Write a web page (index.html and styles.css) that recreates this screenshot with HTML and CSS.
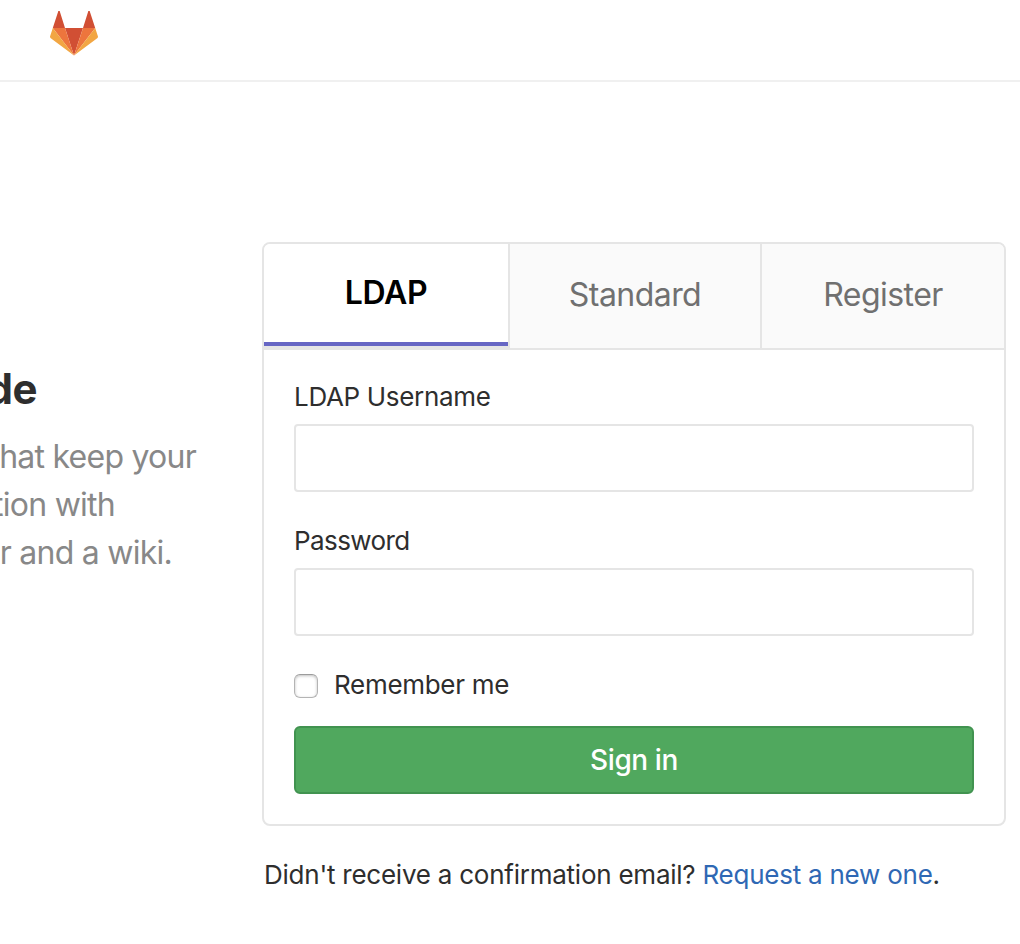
FILE: index.html
```html
<!DOCTYPE html>
<html lang="en">
<head>
<meta charset="utf-8">
<title>Sign in · GitLab</title>
<link rel="stylesheet" href="styles.css">
</head>
<body>
<header class="navbar">
  <svg class="logo" width="48" height="45" viewBox="0 0 48 45" aria-label="GitLab">
    <path fill="#d14f34" d="M24 44.5 15 17h18z"/>
    <path fill="#ed753d" d="M24 44.5 15 17H2.8z"/>
    <path fill="#f2a643" d="M2.8 17 .1 25.2a1.8 1.8 0 0 0 .7 2L24 44.5z"/>
    <path fill="#d14f34" d="M2.8 17H15L9.9.7a.9.9 0 0 0-1.8 0z"/>
    <path fill="#ed753d" d="M24 44.5 33 17h12.2z"/>
    <path fill="#f2a643" d="M45.2 17l2.7 8.2a1.8 1.8 0 0 1-.7 2L24 44.5z"/>
    <path fill="#d14f34" d="M45.2 17H33L38.1.7a.9.9 0 0 1 1.8 0z"/>
  </svg>
</header>
<main class="content">
  <section class="intro">
    <h1 class="intro-title">de</h1>
    <p class="intro-line line-1">hat keep your</p>
    <p class="intro-line line-2">tion with</p>
    <p class="intro-line line-3">r and a wiki.</p>
  </section>
  <section class="login">
    <div class="panel">
      <nav class="tabs">
        <a class="tab active">LDAP</a>
        <a class="tab">Standard</a>
        <a class="tab">Register</a>
      </nav>
      <form class="form">
        <label class="label" for="user">LDAP Username</label>
        <input class="input" id="user" type="text">
        <label class="label l-pass" for="pass">Password</label>
        <input class="input" id="pass" type="password">
        <label class="remember"><input class="check" type="checkbox"><span class="remember-text">Remember me</span></label>
        <button class="submit" type="button">Sign in</button>
      </form>
    </div>
    <p class="confirm">Didn't receive a confirmation email? <a class="link">Request a new one</a>.</p>
  </section>
</main>
</body>
</html>
```
FILE: styles.css
```css
* { box-sizing: border-box; }
body { margin: 0; background: #fff; color: #2e2e2e; font-family: Inter, "Liberation Sans", sans-serif; font-size: 26px; overflow: hidden; }
.navbar { height: 82px; border-bottom: 2px solid #f0f0f0; padding: 11px 0 0 50px; }
.logo { display: block; }
.content { display: flex; padding-top: 160px; }
.intro { width: 262px; padding-top: 123px; overflow: hidden; }
.intro-title { display: flex; justify-content: flex-end; margin: 0 0 20px; width: 37px; font-size: 42px; line-height: 48px; font-weight: 700; letter-spacing: -0.5px; }
.intro-line { display: flex; justify-content: flex-end; margin: 0; white-space: nowrap; font-size: 32px; line-height: 48px; color: #888; letter-spacing: -0.75px; }
.line-1 { width: 196px; }
.line-2 { width: 115px; }
.line-3 { width: 172px; }
.login { width: 744px; }
.panel { height: 584px; border: 2px solid #e5e5e5; border-radius: 8px; overflow: hidden; }
.tabs { display: grid; grid-template-columns: 246px 252px 242px; height: 106px; border-bottom: 2px solid #e5e5e5; }
.tab { display: flex; align-items: center; justify-content: center; background: #fafafa; color: #707070; font-size: 32px; line-height: 40px; letter-spacing: -0.55px; border-right: 2px solid #e5e5e5; padding-bottom: 2px; }
.tab:last-child { border-right: 0; }
.tab.active { background: linear-gradient(#6666c4, #6666c4) 0 98px / 100% 4px no-repeat padding-box, linear-gradient(#e5e5e5, #e5e5e5) 0 102px / 100% 2px no-repeat padding-box, #fff; color: #000; font-weight: 600; letter-spacing: -0.4px; padding-bottom: 6px; }
.form { display: flex; flex-direction: column; padding: 29px 30px 30px; }
.label { height: 36px; line-height: 36px; margin-bottom: 9px; letter-spacing: -0.32px; }
.input { width: 680px; height: 68px; border: 2px solid #e5e5e5; border-radius: 4px; padding: 12px 20px; font: inherit; background: #fff; outline: 0; }
.l-pass { margin-top: 31px; letter-spacing: -0.6px; }
.remember { display: flex; align-items: center; gap: 16px; height: 36px; margin: 31px 0 23px; letter-spacing: -0.3px; }
.remember-text { padding-bottom: 2px; }
.check { appearance: none; width: 24px; height: 24px; margin: 1px 0 0; border: 1px solid #b4b4b4; border-top-color: #9c9c9c; border-radius: 6px; background: #fff; box-shadow: inset 0 1px 3px rgba(0, 0, 0, 0.25); }
.submit { height: 68px; border: 2px solid #419350; border-radius: 6px; background: #50a85e; color: #fff; font: 500 28px/40px Inter, "Liberation Sans", sans-serif; letter-spacing: -0.4px; padding: 0; }
.confirm { margin: 31px 0 0 2px; line-height: 36px; white-space: nowrap; letter-spacing: -0.24px; }
.link { color: #2f68b4; }
```
